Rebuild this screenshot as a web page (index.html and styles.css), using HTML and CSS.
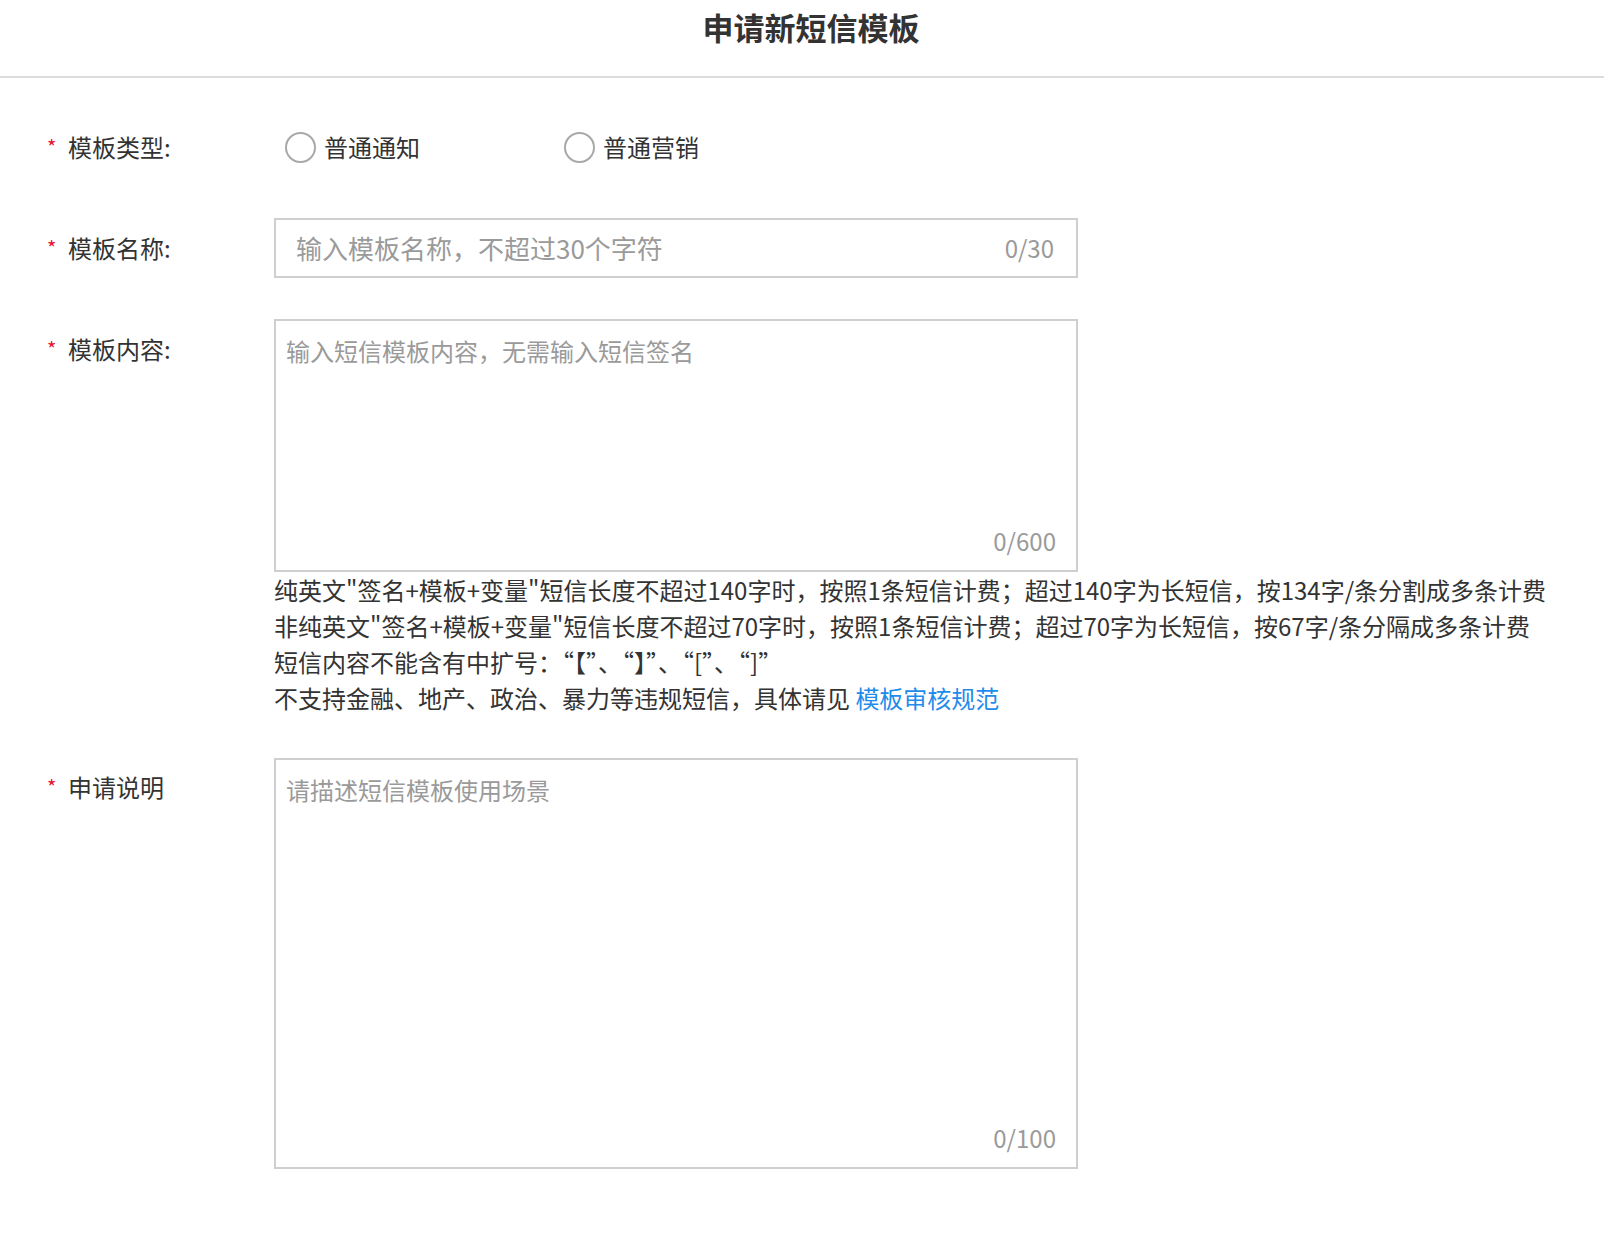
FILE: index.html
```html
<!DOCTYPE html>
<html lang="zh-CN">
<head>
<meta charset="utf-8">
<title>申请新短信模板</title>
<link rel="stylesheet" href="styles.css">
</head>
<body>
<div class="page">
  <header class="header">
    <h1 class="title">申请新短信模板</h1>
  </header>
  <form class="form">
    <div class="row row-type">
      <div class="label"><span class="req">*</span>模板类型:</div>
      <div class="control radios">
        <label class="radio"><span class="circle"></span><span class="radio-text">普通通知</span></label>
        <label class="radio"><span class="circle"></span><span class="radio-text">普通营销</span></label>
      </div>
    </div>
    <div class="row row-name">
      <div class="label"><span class="req">*</span>模板名称:</div>
      <div class="control">
        <div class="input">
          <span class="placeholder">输入模板名称，不超过30个字符</span>
          <span class="count">0/30</span>
        </div>
      </div>
    </div>
    <div class="row row-content">
      <div class="label label-top"><span class="req">*</span>模板内容:</div>
      <div class="control">
        <div class="textarea ta-content">
          <span class="ta-placeholder">输入短信模板内容，无需输入短信签名</span>
          <span class="ta-count">0/600</span>
        </div>
        <div class="help">
          <p>纯英文"签名+模板+变量"短信长度不超过140字时，按照1条短信计费；超过140字为长短信，按134字/条分割成多条计费</p>
          <p>非纯英文"签名+模板+变量"短信长度不超过70字时，按照1条短信计费；超过70字为长短信，按67字/条分隔成多条计费</p>
          <p>短信内容不能含有中扩号：“【”、“】”、“[”、“]”</p>
          <p>不支持金融、地产、政治、暴力等违规短信，具体请见 <a class="link" href="#">模板审核规范</a></p>
        </div>
      </div>
    </div>
    <div class="row row-desc">
      <div class="label label-top2"><span class="req">*</span>申请说明</div>
      <div class="control">
        <div class="textarea ta-desc">
          <span class="ta-placeholder">请描述短信模板使用场景</span>
          <span class="ta-count">0/100</span>
        </div>
      </div>
    </div>
  </form>
</div>
</body>
</html>
```

FILE: styles.css
```css
* { box-sizing: border-box; }
html, body {
  margin: 0;
  padding: 0;
  background: #fff;
}
body {
  font-family: "PingFang SC", "Noto Sans CJK SC", "Noto Sans", sans-serif;
  color: #333;
  font-size: 24px;
  line-height: 36px;
}
.header {
  height: 78px;
  border-bottom: 2px solid #dcdcdc;
  display: flex;
  justify-content: center;
  padding-top: 6px;
  padding-left: 18px;
}
.title {
  margin: 0;
  font-size: 31px;
  line-height: 42px;
  font-weight: 700;
  color: #333;
}
.form {
  padding-top: 51px;
}
.row {
  display: grid;
  grid-template-columns: 274px 804px;
}
.label {
  padding-left: 47px;
  display: flex;
  align-items: center;
  color: #333;
  white-space: nowrap;
}
.req {
  color: #e8112d;
  font-size: 20px;
  width: 21px;
  display: inline-block;
}
.row-type { height: 36px; }
.radios {
  display: flex;
  align-items: center;
  padding-left: 11px;
}
.radio {
  display: flex;
  align-items: center;
  width: 279px;
}
.circle {
  width: 31px;
  height: 31px;
  border: 2px solid #a8a8a8;
  border-radius: 50%;
  margin-right: 8px;
  flex: none;
}
.row-name { margin-top: 53px; }
.input {
  height: 60px;
  border: 2px solid #cfcfcf;
  display: flex;
  align-items: center;
  justify-content: space-between;
  padding: 0 22px 0 20px;
}
.placeholder {
  color: #9a9a9a;
  font-size: 26px;
}
.count {
  color: #9a9a9a;
  font-size: 24px;
}
.row-content { margin-top: 41px; }
.label-top, .label-top2 {
  align-items: flex-start;
  padding-top: 12px;
}
.label-top2 { padding-top: 11px; }
.textarea {
  border: 2px solid #cfcfcf;
  position: relative;
  padding: 12px 10px;
}
.ta-content { height: 253px; }
.ta-desc { height: 411px; }
.ta-placeholder {
  color: #9a9a9a;
  display: block;
}
.ta-count {
  position: absolute;
  right: 20px;
  bottom: 11px;
  color: #9a9a9a;
}
.help {
  width: 1330px;
  color: #333;
}
.help p {
  margin: 0;
  white-space: nowrap;
}
.link {
  color: #1f8ceb;
  text-decoration: none;
}
.row-desc { margin-top: 42px; }
```
